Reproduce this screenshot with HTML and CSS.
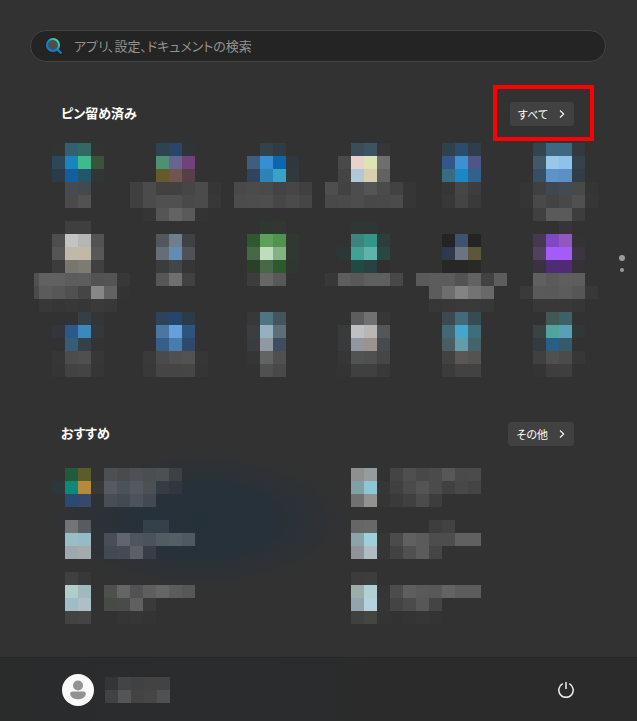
FILE: index.html
```html
<!DOCTYPE html>
<html lang="ja">
<head>
    <meta charset="UTF-8">
    <meta name="viewport" content="width=device-width, initial-scale=1.0">
    <title>スタート</title>
    <link rel="stylesheet" href="styles.css">
</head>
<body>
    <main class="start">
        <form class="search" role="search">
            <svg class="search-icon" viewBox="0 0 16 16" aria-hidden="true">
                <defs>
                    <linearGradient id="ring" x1="0" y1="1" x2="1" y2="0">
                        <stop offset="0.45" stop-color="#0f7fd6"/>
                        <stop offset="0.75" stop-color="#3cc6a4"/>
                        <stop offset="1" stop-color="#5fe08a"/>
                    </linearGradient>
                </defs>
                <path d="M11.5 11.5L14.8 14.8" stroke="#1180d8" stroke-width="2" stroke-linecap="round"/>
                <circle cx="7" cy="7" r="6" fill="#4a4e50" stroke="url(#ring)" stroke-width="2"/>
            </svg>
            <input class="search-input" type="text" aria-label="検索" placeholder="アプリ、設定、ドキュメントの検索">
        </form>

        <div class="section-head">
            <h2>ピン留め済み</h2>
            <div class="marked">
                <button class="more" type="button">すべて
                    <svg viewBox="0 0 6 8" aria-hidden="true"><path d="M1 0.5L4.7 4L1 7.5"/></svg>
                </button>
            </div>
        </div>
        <div class="pinned">
            <div class="apps" id="apps"></div>
            <div class="pager">
                <span class="dot current"></span>
                <span class="dot"></span>
            </div>
        </div>

        <div class="section-head recommended">
            <h2>おすすめ</h2>
            <button class="more" type="button">その他
                <svg viewBox="0 0 6 8" aria-hidden="true"><path d="M1 0.5L4.7 4L1 7.5"/></svg>
            </button>
        </div>
        <div class="files" id="files"></div>
    </main>

    <footer class="bar">
        <button class="user" id="user" type="button" aria-label="ユーザー">
            <svg class="avatar" viewBox="0 0 32 32" aria-hidden="true">
                <circle cx="16" cy="16" r="16" fill="#fafafa"/>
                <circle cx="16" cy="11.5" r="5" fill="#929292"/>
                <path d="M10.5 17.5h11a2.3 2.3 0 0 1 2.3 2.3c0 3.4-3.6 5.5-7.8 5.5s-7.8-2.1-7.8-5.5a2.3 2.3 0 0 1 2.3-2.3z" fill="#929292"/>
            </svg>
        </button>
        <button class="power" type="button" aria-label="電源">
            <svg viewBox="0 0 16 16" aria-hidden="true">
                <path d="M4.8 1.7A7.2 7.2 0 1 0 11.2 1.7M8 0V7"/>
            </svg>
        </button>
    </footer>
    <script src="script.js"></script>
</body>
</html>
```
FILE: styles.css
```css
* {
    box-sizing: border-box;
    margin: 0;
    padding: 0;
}
body {
    display: flex;
    flex-direction: column;
    min-height: 100vh;
    background:
        radial-gradient(ellipse 150px 70px at 200px 520px, #25313a 0%, #283139 50%, rgba(50, 50, 50, 0) 100%),
        #323232;
    color: #fff;
    font-family: "Noto Sans CJK JP", sans-serif;
    font-feature-settings: "palt";
}
button, input {
    border: 0;
    background: none;
    color: inherit;
    font: inherit;
    font-feature-settings: inherit;
}
.start {
    padding-top: 30px;
}

/* search */
.search {
    display: flex;
    align-items: center;
    gap: 12px;
    height: 32px;
    margin: 0 31px 0 30px;
    padding: 0 15px;
    border: 1px solid #444;
    border-radius: 16px;
    background: #242424;
}
.search-icon {
    width: 16px;
    height: 16px;
    fill: none;
}
.search-input {
    flex: 1;
    padding-bottom: 2px;
    font-size: 13px;
    outline: none;
}
.search-input::placeholder {
    color: #929292;
    opacity: 1;
}

/* section titles */
.section-head {
    display: flex;
    justify-content: space-between;
    align-items: center;
    margin: 40px 63px 17px 61px;
}
.section-head.recommended {
    margin-top: 45px;
    margin-bottom: 22px;
}
h2 {
    padding-bottom: 2px;
    font-size: 13px;
    line-height: 20px;
    font-weight: 700;
}
.more {
    display: flex;
    align-items: center;
    gap: 11px;
    height: 24px;
    padding: 0 9px 0 8px;
    border-radius: 4px;
    background: #414141;
    font-size: 11px;
}
.more svg {
    width: 6px;
    height: 8px;
    fill: none;
    stroke: #eee;
    stroke-width: 1.2;
}
.marked {
    position: relative;
}
.marked::after {
    content: "";
    position: absolute;
    inset: -17px -20px -15px -17px;
    border: 4px solid #f00;
    pointer-events: none;
}

/* pinned apps */
.pinned {
    display: flex;
    align-items: center;
}
.apps {
    flex: 1;
    display: grid;
    grid-template-columns: repeat(6, 1fr);
    padding-left: 39px;
}
.tile {
    display: block;
}
.tiles-svg {
    display: block;
    overflow: visible;
    shape-rendering: crispEdges;
}
.apps .tiles-svg {
    margin: 0 auto;
}
.pager {
    display: flex;
    flex-direction: column;
    align-items: center;
    gap: 7px;
    width: 52px;
    padding: 6px 0 0 22px;
}
.dot {
    width: 4px;
    height: 4px;
    border-radius: 50%;
    background: #9b9b9b;
}
.dot.current {
    width: 6px;
    height: 6px;
}

/* recommended files */
.files {
    display: grid;
    grid-template-columns: repeat(2, 1fr);
    padding-left: 65px;
}

/* bottom bar */
.bar {
    display: flex;
    justify-content: space-between;
    align-items: center;
    height: 64px;
    margin-top: auto;
    padding: 0 63px 0 62px;
    border-top: 1px solid #262626;
    background: linear-gradient(90deg, #2a2b2b 0%, #2a2c2e 35%, #2b2b2b 60%);
}
.user {
    display: flex;
    align-items: center;
    gap: 11px;
}
.avatar {
    width: 32px;
    height: 32px;
}
.power {
    display: flex;
}
.power svg {
    width: 16px;
    height: 16px;
    fill: none;
    stroke: #eee;
    stroke-width: 1.5;
}
```
FILE: script.js
```js
// every tile is a list of runs: [column, row, colours...]
const CELL = 13

const apps = [
    [
        [1, 0, '#323433 #32606e #346862 #333'],
        [1, 1, '#2d4759 #1b84c0 #3fba8d #39543a'],
        [1, 2, '#2c3b48 #115f9f #245669 #303536'],
        [2, 3, '#464b52 #44494d'],
        [2, 4, '#4a4a4a #525252']
    ],
    [
        [2, 0, '#2d434e #29466a #303439'],
        [2, 1, '#4c9174 #65668f #734179'],
        [2, 2, '#655a2c #70554f #563f47'],
        [0, 3, '#404040 #4b4b4b #414141 #414141 #464646 #4b4b4b #363636'],
        [0, 4, '#404040 #4b4b4b #505050 #505050 #494949 #4b4b4b #383838'],
        [1, 5, '#353535 #555 #636363 #5a5a5a #343434']
    ],
    [
        [3, 0, '#31424b #303b43'],
        [2, 1, '#3d5e7c #368fd3 #0d65ad #31383d'],
        [2, 2, '#30455b #2e83b5 #38a3c5 #303a3e'],
        [1, 3, '#494949 #4b4b4b #4a4a4a #434343 #464646 #404040'],
        [1, 4, '#4c4c4c #4d4d4d #4e4e4e #464646 #4b4b4b #464646']
    ],
    [
        [3, 0, '#3b4d56 #3b5362 #363636'],
        [2, 1, '#494949 #ead2cc #dce4b7 #6e6e6e'],
        [2, 2, '#444 #b0c9d7 #d8cfb0 #626262'],
        [1, 3, '#4e4e4e #424242 #4d4d4d #555 #4b4b4b #424242 #363636'],
        [1, 4, '#494949 #4a4a4a #4d4d4d #484848 #494949 #4b4b4b #363636']
    ],
    [
        [3, 0, '#2f414c #2d4c6b #303e4b'],
        [3, 1, '#35568a #3c91d3 #4d5689'],
        [3, 2, '#3a6c80 #1b87c4 #30628d'],
        [3, 3, '#363636 #464646 #3d3d3d'],
        [3, 4, '#383838 #444 #3a3a3a']
    ],
    [
        [3, 0, '#34444d #3d6882 #3d6882 #33393c'],
        [3, 1, '#425869 #98c8e9 #8fc2e8 #34424b'],
        [3, 2, '#384e64 #5c94c7 #5990c6 #323d47'],
        [2, 3, '#353535 #404040 #414750 #444a53 #484a48 #353535'],
        [2, 4, '#353535 #494949 #434343 #484848 #505050 #363636'],
        [3, 5, '#404040 #5a5a5a #5a5a5a #3d3d3d']
    ],
    [
        [2, 0, '#3f3f3f #3f3f3f'],
        [1, 1, '#4e4e4e #c2c3c3 #b4b7b6 #535353'],
        [1, 2, '#555 #c0b8aa #c1b8a6 #585858'],
        [1, 3, '#3c3c3c #777770 #7c7c75 #404040'],
        [-0.4, 4, '#515151'],
        [-0.4, 5, '#4b4b4b'],
        [0, 4, '#616161 #616161 #5c5c5c #5d5d5d #525252 #545454 #383838'],
        [0, 5, '#5b5b5b #575757 #505050 #454545 #878787 #626262 #333'],
        [0, 6, '#383838 #363636 #383838 #363636 #3a3a3a #383838']
    ],
    [
        [2, 1, '#52575b #6d7f8e #3f4143'],
        [2, 2, '#656e76 #638cb3 #4e5256'],
        [2, 3, '#3a3c3e #424649 #343638'],
        [2, 4, '#565656 #6f6f6f #414141']
    ],
    [
        [3, 0, '#2f382f #303830'],
        [2, 1, '#31572f #5da05a #4f944e #30382f'],
        [2, 2, '#466846 #bdddbd #83b383 #313831'],
        [2, 3, '#2a402b #476946 #2d592d #303630'],
        [2, 4, '#3d3d3d #666 #585858']
    ],
    [
        [3, 0, '#303535 #303535'],
        [3, 1, '#3e847c #349589 #2c3d3c'],
        [2, 2, '#2e3738 #42a195 #60b3aa #294841'],
        [3, 3, '#214a46 #28423f #303030'],
        [1, 4, '#383838 #5d5d5d #585858 #5f5f5f #5f5f5f #484848']
    ],
    [
        [3, 1, '#242424 #3e5370 #242424'],
        [3, 2, '#2e394e #6c7381 #5d5739'],
        [3, 3, '#272723 #272724 #292928'],
        [1, 4, '#5a5a5a #5c5c5c #5c5c5c #535353 #626262 #424242 #5d5d5d'],
        [2, 5, '#5c5c5c #6e6e6e #838383 #737373 #696969'],
        [2, 6, '#373737 #383838 #3a3a3a #3a3a3a #383838']
    ],
    [
        [5, 0, '#38343b'],
        [3, 1, '#463850 #8049c4 #9159c0 #333'],
        [3, 2, '#51405e #a45bf8 #a45bf8 #3c3441'],
        [3, 3, '#3a3240 #4f2d75 #4e2b73 #353137'],
        [3, 4, '#606060 #5a5a5a #5e5e5e #5d5d5d'],
        [2, 5, '#3a3a3a #5a5a5a #595959 #5c5c5c #565656 #383838'],
        [3, 6, '#383838 #383838 #383838 #363636']
    ],
    [
        [3, 0, '#343f47 #333537'],
        [1, 1, '#32353e #2b598b #3c87bc #31393f'],
        [2, 2, '#365c7a #344149 #333'],
        [1, 3, '#363636 #4c4c4c #4f4f4f #373737'],
        [1, 4, '#353535 #424242 #444 #363636']
    ],
    [
        [2, 0, '#2d435b #24456c #2c3b49'],
        [2, 1, '#4a76a4 #66a0dc #2d547e'],
        [2, 2, '#375e86 #487bae #30496a'],
        [1, 3, '#3a3a3a #4a4a4a #505050 #525252 #363636'],
        [1, 4, '#393939 #454545 #454545 #464646 #353535']
    ],
    [
        [2, 0, '#383838 #4f7680 #44545c'],
        [2, 1, '#3b3d41 #93b1c1 #5d6e79'],
        [2, 2, '#3a3c3f #9098a1 #3f4d61'],
        [2, 3, '#353535 #626463 #505050'],
        [3, 4, '#505050 #494949']
    ],
    [
        [3, 0, '#5c5d5e #707172 #373737'],
        [2, 1, '#393b3a #bdc1c4 #b8b7b6 #535759'],
        [2, 2, '#383a3c #9196a0 #9b938f #474b4e'],
        [2, 3, '#363636 #515352 #505050 #464646'],
        [2, 4, '#343434 #404040 #404040 #393939']
    ],
    [
        [3, 0, '#3a4a50 #426a79 #374b52'],
        [3, 1, '#426973 #42a7cb #3e6e7c'],
        [3, 2, '#4a5d62 #649ba9 #47636a'],
        [3, 3, '#434241 #5c5754 #555352'],
        [3, 4, '#3b3b3b #424242 #424242']
    ],
    [
        [4, 0, '#415952 #3c6268'],
        [3, 1, '#3a4344 #4fa49b #57a1b6 #313639'],
        [3, 2, '#333a40 #285f83 #355b6b'],
        [3, 3, '#404040 #4f4f4f #4b4b4b #373737'],
        [3, 4, '#343434 #3e3e3e #3f3f3f']
    ]
]

const files = [
    [
        [0, 0, '#1f5b3d #5c5c2b'],
        [-1, 1, '#2d3638 #0e8878 #b48b3c #393837'],
        [0, 2, '#294b73 #37486b'],
        [3, 0, '#4c5052 #484c4f #4e5055 #4a4e50 #4b5052 #3c4144'],
        [3, 1, '#565962 #4c525a #515a60 #4a5054 #343d44 #31373e'],
        [3, 2, '#484e56 #434a51 #4d535b #424953']
    ],
    [
        [0, 0, '#908f8f #969c9e'],
        [0, 1, '#80a0a5 #90c5d3 #363636'],
        [0, 2, '#717171 #92928f #353535'],
        [3, 0, '#444 #4f4f4f #484848 #4b4b4b #575757 #4a4a4a #4b4b4b'],
        [3, 1, '#404040 #4b4b4b #545454 #4b4b4b #414141 #484848 #444'],
        [3, 2, '#3a3a3a #404040 #4b4b4b #3d3d3d']
    ],
    [
        [0, 0, '#727477 #585b5f'],
        [0, 1, '#98bec5 #97bbc6'],
        [0, 2, '#9fa8ae #a4abad'],
        [6, 0, '#34414b #35404a'],
        [3, 1, '#484e57 #61666e #4d565e #4a525c #515b62 #535e65 #515861'],
        [3, 2, '#434952 #464b53 #5d5f68 #373e47']
    ],
    [
        [0, 0, '#666 #686868'],
        [0, 1, '#8aa4a9 #9dd0da #363636'],
        [0, 2, '#909498 #b1bbc2 #363636'],
        [6, 0, '#3e3e3e #424242'],
        [3, 1, '#4b4b4b #606060 #5b5b5b #4d4d4d #4d4d4d #606060 #606060'],
        [3, 2, '#424242 #505050 #5b5b5b #454545']
    ],
    [
        [0, 0, '#404041 #383838'],
        [0, 1, '#b1cdc9 #a0b9bd'],
        [0, 2, '#a2bbc8 #aebfc7'],
        [0, 3, '#424242 #444'],
        [3, 1, '#4e504e #646565 #525254 #5e5e5e #646663 #5b5c5e #565856'],
        [3, 2, '#484a48 #484b49 #606060 #3a3a3a'],
        [4, 3, '#353535 #363636 #343434']
    ],
    [
        [0, 0, '#3c3c3c #3d3d3d'],
        [0, 1, '#9dadaa #b0d0d3 #353535'],
        [0, 2, '#93a4ad #b5d1dd #363636'],
        [0, 3, '#40403d #464641 #343434'],
        [3, 1, '#4c4c4c #5e5e5e #595959 #585858 #636363 #5c5c5c #5c5c5c'],
        [3, 2, '#444 #4b4b4b #575757 #444'],
        [4, 3, '#343434 #363636 #343434']
    ]
]

const user = [
    [0, 0, '#353537 #434445 #404142 #434343 #434343'],
    [0, 1, '#414244 #555 #434343 #464646 #515151']
]

const draw = (runs, cols, rows) => {
    let cells = ''
    runs.forEach(([x, y, colours]) => {
        colours.split(' ').forEach((fill, i) => {
            cells += `<rect x="${(x + i) * CELL}" y="${y * CELL}" width="${CELL}" height="${CELL}" fill="${fill}"/>`
        })
    })
    return `<svg class="tiles-svg" width="${cols * CELL}" height="${rows * CELL}" aria-hidden="true">${cells}</svg>`
}

// the pinned rows are 6, 7 and 5 cells high
const rowHeights = [6, 7, 5]

document.querySelector('#apps').innerHTML = apps.map((runs, i) =>
    `<button class="tile" type="button" aria-label="アプリ ${i + 1}">${draw(runs, 7, rowHeights[Math.floor(i / 6)])}</button>`
).join('')

document.querySelector('#files').innerHTML = files.map((runs, i) =>
    `<button class="tile" type="button" aria-label="ファイル ${i + 1}">${draw(runs, 10, 4)}</button>`
).join('')

document.querySelector('#user').insertAdjacentHTML('beforeend', draw(user, 5, 2))
```
